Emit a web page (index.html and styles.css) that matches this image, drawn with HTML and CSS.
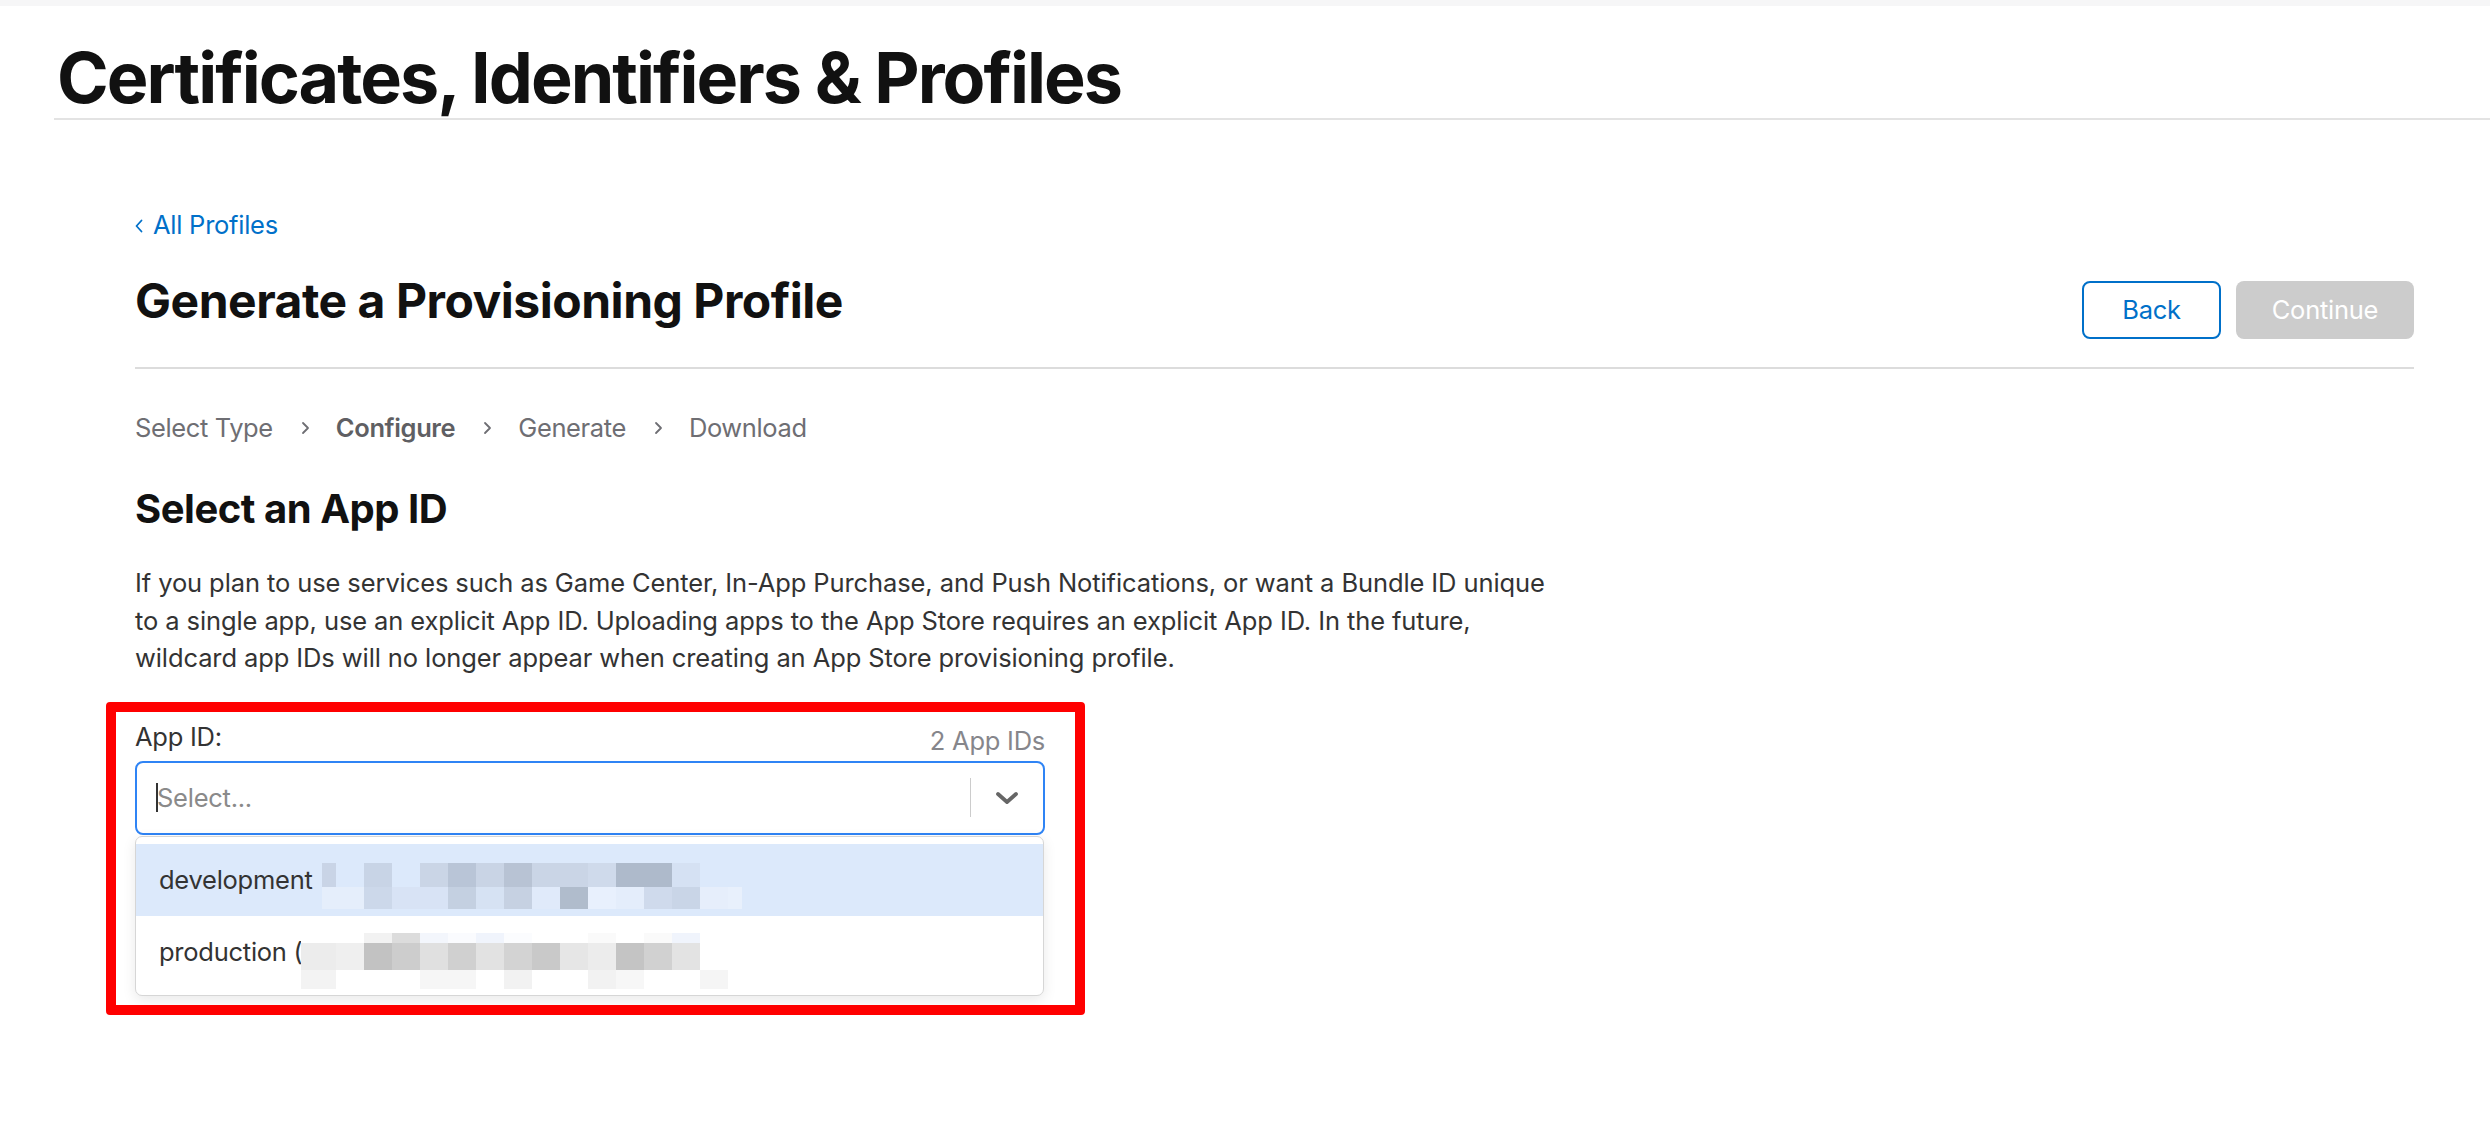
FILE: index.html
```html
<!DOCTYPE html>
<html lang="en">
<head>
<meta charset="utf-8">
<title>Certificates, Identifiers &amp; Profiles</title>
<link rel="stylesheet" href="styles.css">
</head>
<body>
<div class="topband"></div>
<header class="site-head">
  <h1 class="site-title">Certificates, Identifiers &amp; Profiles</h1>
</header>
<main class="content">
  <a class="back-link" href="#">
    <svg class="back-chev" width="8" height="14" viewBox="0 0 8 14"><path d="M6.5 1.5 L1.5 7 L6.5 12.5" fill="none" stroke="#0070c9" stroke-width="1.8" stroke-linecap="round" stroke-linejoin="round"/></svg>
    <span>All Profiles</span>
  </a>
  <div class="page-head">
    <h2 class="page-title">Generate a Provisioning Profile</h2>
    <div class="actions">
      <button class="btn btn-back">Back</button>
      <button class="btn btn-continue">Continue</button>
    </div>
  </div>
  <nav class="steps">
    <span class="step">Select Type</span>
    <svg class="step-chev" width="9" height="14" viewBox="0 0 9 14"><path d="M2 2 L7 7 L2 12" fill="none" stroke="#6e6e73" stroke-width="1.8" stroke-linecap="round" stroke-linejoin="round"/></svg>
    <span class="step step-current">Configure</span>
    <svg class="step-chev" width="9" height="14" viewBox="0 0 9 14"><path d="M2 2 L7 7 L2 12" fill="none" stroke="#6e6e73" stroke-width="1.8" stroke-linecap="round" stroke-linejoin="round"/></svg>
    <span class="step">Generate</span>
    <svg class="step-chev" width="9" height="14" viewBox="0 0 9 14"><path d="M2 2 L7 7 L2 12" fill="none" stroke="#6e6e73" stroke-width="1.8" stroke-linecap="round" stroke-linejoin="round"/></svg>
    <span class="step">Download</span>
  </nav>
  <h3 class="section-title">Select an App ID</h3>
  <p class="intro">If you plan to use services such as Game Center, In-App Purchase, and Push Notifications, or want a Bundle ID unique to a single app, use an explicit App ID. Uploading apps to the App Store requires an explicit App ID. In the future, wildcard app IDs will no longer appear when creating an App Store provisioning profile.</p>

  <div class="field">
    <div class="field-label-row">
      <label class="field-label">App ID:</label>
      <span class="field-count">2 App IDs</span>
    </div>
    <div class="select">
      <div class="select-value"><span class="caret"></span><span class="placeholder">Select...</span></div>
      <span class="select-sep"></span>
      <span class="select-arrow">
        <svg width="24" height="14" viewBox="0 0 24 14"><path d="M3 3 L12 11 L21 3" fill="none" stroke="#666666" stroke-width="3.8" stroke-linecap="round" stroke-linejoin="round"/></svg>
      </span>
    </div>
    <div class="menu">
      <div class="option option-active">
        <span>development</span>
        <div class="mosaic mosaic-dev">
          <i style="background:#c9d4e6"></i><i style="background:#dce9fb"></i><i style="background:#c8d4e6"></i><i style="background:#dce9fb"></i><i style="background:#cad5e6"></i><i style="background:#b9c5d7"></i><i style="background:#c9d4e5"></i><i style="background:#b8c3d4"></i><i style="background:#cad5e6"></i><i style="background:#cad5e6"></i><i style="background:#cfdaeb"></i><i style="background:#aebacb"></i><i style="background:#aebacb"></i><i style="background:#d5e1f3"></i><i style="background:#dce9fb"></i><i style="background:#dce9fb"></i>
          <i style="background:#e5eefb"></i><i style="background:#e5eefb"></i><i style="background:#ccd8ea"></i><i style="background:#d8e3f5"></i><i style="background:#d8e3f5"></i><i style="background:#c4d0e1"></i><i style="background:#d6e2f3"></i><i style="background:#c6d1e2"></i><i style="background:#e0eafa"></i><i style="background:#b0bccc"></i><i style="background:#e8f0fd"></i><i style="background:#e4edfb"></i><i style="background:#cfdaec"></i><i style="background:#c9d5e7"></i><i style="background:#e6eefb"></i><i style="background:#e8f0fc"></i>
        </div>
      </div>
      <div class="option">
        <span>production (</span>
        <div class="mosaic mosaic-prod">
          <i style="background:#ffffff"></i><i style="background:#ffffff"></i><i style="background:#f2f2f2"></i><i style="background:#dcdcdc"></i><i style="background:#f3f6fc"></i><i style="background:#fafbfe"></i><i style="background:#f0f4fc"></i><i style="background:#fbfcfe"></i><i style="background:#ffffff"></i><i style="background:#ffffff"></i><i style="background:#fafafa"></i><i style="background:#ffffff"></i><i style="background:#fafafa"></i><i style="background:#f0f4fc"></i><i style="background:#ffffff"></i>
          <i style="background:#ececec"></i><i style="background:#efefef"></i><i style="background:#c2c2c2"></i><i style="background:#cdcdcd"></i><i style="background:#e0e0e0"></i><i style="background:#d0d0d0"></i><i style="background:#e2e2e2"></i><i style="background:#d3d3d3"></i><i style="background:#c9c9c9"></i><i style="background:#e6e6e6"></i><i style="background:#ececec"></i><i style="background:#c4c4c4"></i><i style="background:#d1d1d1"></i><i style="background:#e3e3e3"></i><i style="background:#ffffff"></i>
          <i style="background:#f3f3f3"></i><i style="background:#ffffff"></i><i style="background:#ffffff"></i><i style="background:#ffffff"></i><i style="background:#f6f6f6"></i><i style="background:#f6f6f6"></i><i style="background:#ffffff"></i><i style="background:#f2f2f2"></i><i style="background:#ffffff"></i><i style="background:#ffffff"></i><i style="background:#f2f2f2"></i><i style="background:#f7f7f7"></i><i style="background:#ffffff"></i><i style="background:#ffffff"></i><i style="background:#f5f5f5"></i>
        </div>
      </div>
    </div>
    <div class="highlight-box"></div>
  </div>
</main>
</body>
</html>
```
FILE: styles.css
```css
* { box-sizing: border-box; }

body {
  margin: 0;
  background: #ffffff;
  font-family: Inter, "Noto Sans", "Liberation Sans", sans-serif;
  color: #333333;
}

.topband {
  height: 6px;
  background: #f6f6f7;
}

.site-head {
  margin-left: 54px;
  padding: 37px 0 5px 3px;
  border-bottom: 2px solid #e3e3e3;
}

.site-title {
  margin: 0;
  font-size: 70px;
  line-height: 70px;
  font-weight: 700;
  letter-spacing: -0.028em;
  color: #111111;
}

.content {
  margin-left: 135px;
  width: 2279px;
  padding-bottom: 100px;
}

.back-link {
  display: inline-flex;
  align-items: center;
  gap: 10px;
  margin-top: 86px;
  font-size: 25.5px;
  line-height: 37.5px;
  color: #0070c9;
  text-decoration: none;
  letter-spacing: -0.01em;
}

.back-chev { margin-top: 3px; }

.page-head {
  display: flex;
  justify-content: space-between;
  align-items: flex-start;
  margin-top: 31px;
  padding-bottom: 28px;
  border-bottom: 2px solid #dcdcdc;
}

.page-title {
  margin: 0;
  font-size: 48px;
  line-height: 52px;
  font-weight: 700;
  letter-spacing: -0.01em;
  color: #111111;
}

.actions {
  display: flex;
  gap: 15px;
  margin-top: 6px;
}

.btn {
  height: 58px;
  border-radius: 8px;
  font-family: inherit;
  font-size: 25.5px;
  letter-spacing: -0.01em;
  padding: 0;
}

.btn-back {
  width: 139px;
  background: #ffffff;
  border: 2px solid #0070c9;
  color: #0070c9;
}

.btn-continue {
  width: 178px;
  background: #cccccc;
  border: 0;
  color: #ffffff;
}

.steps {
  display: flex;
  align-items: center;
  margin-top: 40px;
  font-size: 25.5px;
  line-height: 37.5px;
  color: #6e6e73;
  letter-spacing: -0.015em;
}

.step-current {
  font-weight: 600;
  color: #5f5f63;
}

.step-chev {
  margin: 2px 26px 0 28px;
}

.section-title {
  margin: 39px 0 0;
  font-size: 40px;
  line-height: 48px;
  font-weight: 700;
  color: #111111;
  letter-spacing: -0.012em;
}

.intro {
  margin: 31px 0 0;
  width: 1425px;
  font-size: 25.5px;
  line-height: 37.5px;
  color: #333333;
  letter-spacing: -0.004em;
}

.field {
  position: relative;
  width: 910px;
  margin-top: 41px;
}

.field-label-row {
  display: flex;
  justify-content: space-between;
  align-items: flex-start;
  height: 43px;
}

.field-label {
  font-size: 25.5px;
  line-height: 37.5px;
  color: #333333;
  letter-spacing: -0.01em;
}

.field-count {
  margin-top: 4px;
  font-size: 25.5px;
  line-height: 37.5px;
  color: #86868b;
  letter-spacing: -0.01em;
}

.select {
  display: flex;
  align-items: center;
  height: 74px;
  border: 2.5px solid #2f84f5;
  border-radius: 8px;
  background: #ffffff;
}

.select-value {
  flex: 1;
  display: flex;
  align-items: center;
  padding-left: 19px;
  font-size: 25.5px;
  letter-spacing: -0.01em;
}

.caret {
  display: inline-block;
  width: 2px;
  height: 29px;
  background: #333333;
  margin-right: -1px;
}

.placeholder { color: #8a8a8a; }

.select-sep {
  width: 1.5px;
  height: 39px;
  background: #cccccc;
}

.select-arrow {
  width: 72px;
  display: flex;
  justify-content: center;
  align-items: center;
}

.menu {
  margin-top: 1px;
  width: 909px;
  padding: 7px 0;
  border: 1px solid #d6d6d6;
  border-radius: 7px;
  background: #ffffff;
  box-shadow: 0 4px 14px rgba(0, 0, 0, 0.09);
}

.option {
  position: relative;
  display: flex;
  align-items: center;
  height: 72px;
  padding-left: 23px;
  font-size: 25.5px;
  color: #333333;
  letter-spacing: -0.01em;
}

.option-active { background: #dce9fb; }

.mosaic {
  position: absolute;
  display: grid;
}

.mosaic i { display: block; }

.mosaic-dev {
  left: 186px;
  top: 19px;
  grid-template-columns: 14px repeat(14, 28px) 14px;
  grid-template-rows: 24px 22px;
}

.mosaic-prod {
  left: 165px;
  top: 17px;
  grid-template-columns: 35px repeat(14, 28px);
  grid-template-rows: 10px 27px 19px;
}

.highlight-box {
  position: absolute;
  top: -16px;
  left: -29px;
  right: -40px;
  bottom: -19px;
  border: 10px solid #ff0000;
  border-radius: 4px;
  pointer-events: none;
}
```
